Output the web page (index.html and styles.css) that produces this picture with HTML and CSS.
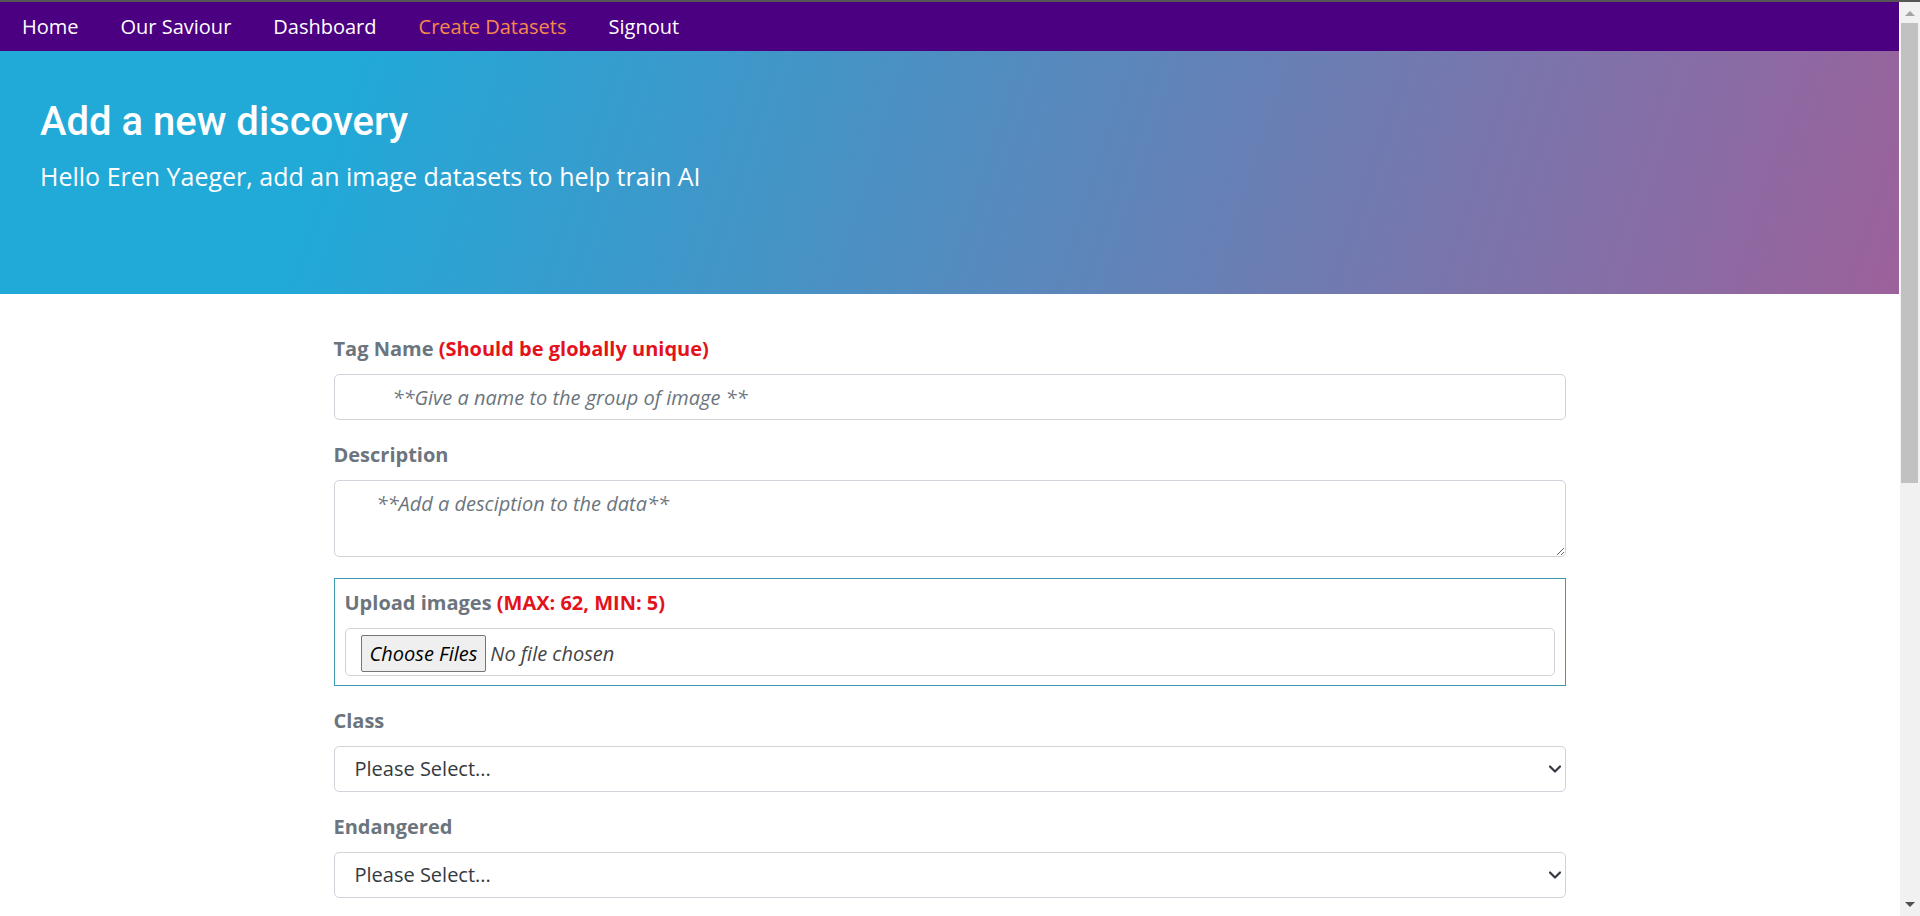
FILE: index.html
```html
<!DOCTYPE html>
<html lang="en">
<head>
<meta charset="utf-8">
<title>Create Datasets</title>
<link rel="stylesheet" href="styles.css">
</head>
<body>
<div class="topline"></div>
<div class="frame">
  <div class="page">
    <nav class="nav">
      <a class="nav-link" href="#">Home</a>
      <a class="nav-link" href="#">Our Saviour</a>
      <a class="nav-link" href="#">Dashboard</a>
      <a class="nav-link active" href="#">Create Datasets</a>
      <a class="nav-link" href="#">Signout</a>
    </nav>
    <header class="hero">
      <h1 class="hero-title">Add a new discovery</h1>
      <p class="hero-lead">Hello Eren Yaeger, add an image datasets to help train AI</p>
    </header>
    <main class="container">
      <form class="form">
        <div class="group">
          <label class="label" for="tag">Tag Name <span class="danger">(Should be globally unique)</span></label>
          <input class="control indent-lg" id="tag" type="text" placeholder="**Give a name to the group of image **">
        </div>
        <div class="group">
          <label class="label" for="desc">Description</label>
          <textarea class="control area indent-sm" id="desc" placeholder="**Add a desciption to the data**"></textarea>
        </div>
        <div class="group upload">
          <label class="label" for="files">Upload images <span class="danger">(MAX: 62, MIN: 5)</span></label>
          <div class="file-box">
            <input class="file" id="files" type="file" multiple>
          </div>
        </div>
        <div class="group">
          <label class="label" for="cls">Class</label>
          <div class="select-wrap">
            <select class="control select" id="cls">
              <option>Please Select...</option>
            </select>
            <svg class="chev" width="12" height="8" viewBox="0 0 12 8"><path d="M1 1.5l5 5 5-5" fill="none" stroke="#343a40" stroke-width="2.2" stroke-linecap="round" stroke-linejoin="round"/></svg>
          </div>
        </div>
        <div class="group">
          <label class="label" for="end">Endangered</label>
          <div class="select-wrap">
            <select class="control select" id="end">
              <option>Please Select...</option>
            </select>
            <svg class="chev" width="12" height="8" viewBox="0 0 12 8"><path d="M1 1.5l5 5 5-5" fill="none" stroke="#343a40" stroke-width="2.2" stroke-linecap="round" stroke-linejoin="round"/></svg>
          </div>
        </div>
      </form>
    </main>
  </div>
  <aside class="scrollbar">
    <div class="sb-btn"><svg width="10" height="6" viewBox="0 0 10 6"><path d="M0 6L5 1L10 6Z" fill="#a3a3a3"/></svg></div>
    <div class="sb-thumb"></div>
    <div class="sb-rest"></div>
    <div class="sb-btn sb-down"><svg width="10" height="6" viewBox="0 0 10 6"><path d="M0 0L5 5L10 0Z" fill="#505050"/></svg></div>
  </aside>
</div>
</body>
</html>
```

FILE: styles.css
```css
* { box-sizing: border-box; }

html, body {
  margin: 0;
  height: 100%;
  overflow: hidden;
}

body {
  display: flex;
  flex-direction: column;
  font-family: "Open Sans", "Liberation Sans", sans-serif;
  background: #fff;
  color: #212529;
}

.topline {
  height: 2px;
  background: #565656;
  flex: none;
}

.frame {
  flex: 1;
  display: flex;
  min-height: 0;
}

.page {
  width: 1899px;
  flex: none;
  overflow: hidden;
}

.nav {
  height: 49px;
  background: #4b0082;
  display: flex;
  align-items: center;
  gap: 42px;
  padding-left: 22px;
}

.nav-link {
  font-size: 20px;
  color: #fff;
  text-decoration: none;
  line-height: 1;
  padding-top: 1px;
}

.nav-link.active {
  color: #f7894c;
}

.hero {
  height: 243px;
  padding: 47px 40px 0;
  background: linear-gradient(108deg, #21a9d8 18%, #9c619b 100%);
  color: #fff;
}

.hero-title {
  font-family: Roboto, "Liberation Sans", sans-serif;
  font-weight: 500;
  font-size: 40px;
  line-height: 1.2;
  margin: 0 0 12px;
}

.hero-lead {
  font-size: 25px;
  line-height: 1.5;
  margin: 0;
}

.container {
  width: 1232px;
  margin: 41px auto 0;
}

.group {
  margin-bottom: 21px;
}

.label {
  display: block;
  font-weight: 700;
  font-size: 20px;
  line-height: 28px;
  color: #6c757d;
  margin-bottom: 11px;
}

.danger {
  color: #e3121b;
}

.control {
  display: block;
  width: 100%;
  height: 46px;
  padding: 7px 14px;
  font-family: "Open Sans", "Liberation Sans", sans-serif;
  font-size: 20px;
  line-height: 30px;
  color: #212529;
  background: #fff;
  border: 1px solid #ced4da;
  border-radius: 5px;
  outline: none;
}

.control::placeholder {
  color: #6c757d;
  font-style: italic;
  opacity: 1;
}

.indent-lg { text-indent: 44px; }
.indent-sm { text-indent: 28px; }

.area {
  height: 77px;
  padding-top: 8px;
  resize: vertical;
}

.upload {
  border: 1px solid #3d9aae;
  padding: 10px 10px 9px;
}

.upload .label {
  margin-bottom: 11px;
}

.file-box {
  height: 48px;
  border: 1px solid #ced4da;
  border-radius: 5px;
  display: flex;
  align-items: center;
  padding-left: 15px;
  padding-top: 3px;
}

.file {
  font-family: "Open Sans", "Liberation Sans", sans-serif;
  font-size: 20px;
  font-style: italic;
  color: #444;
}

.file::file-selector-button {
  font-family: "Open Sans", "Liberation Sans", sans-serif;
  font-size: 20px;
  font-style: italic;
  color: #000;
  background: #efefef;
  border: 1px solid #767676;
  border-radius: 2px;
  height: 37px;
  padding: 0 8px;
  margin-right: 4px;
}

.select-wrap {
  position: relative;
}

.select {
  appearance: none;
  -webkit-appearance: none;
  padding-left: 20px;
  color: #343a40;
}

.chev {
  position: absolute;
  right: 5px;
  top: 19px;
  pointer-events: none;
}

.scrollbar {
  width: 21px;
  flex: none;
  border-left: 1px solid #fff;
  background: #f1f1f1;
  display: flex;
  flex-direction: column;
}

.sb-btn {
  height: 21px;
  display: flex;
  align-items: center;
  justify-content: center;
  flex: none;
}

.sb-thumb {
  height: 460px;
  margin: 0 2px 0 1px;
  background: #c1c1c1;
  flex: none;
}

.sb-rest {
  flex: 1;
}

.sb-down {
  height: 14px;
  align-items: flex-start;
}
```
